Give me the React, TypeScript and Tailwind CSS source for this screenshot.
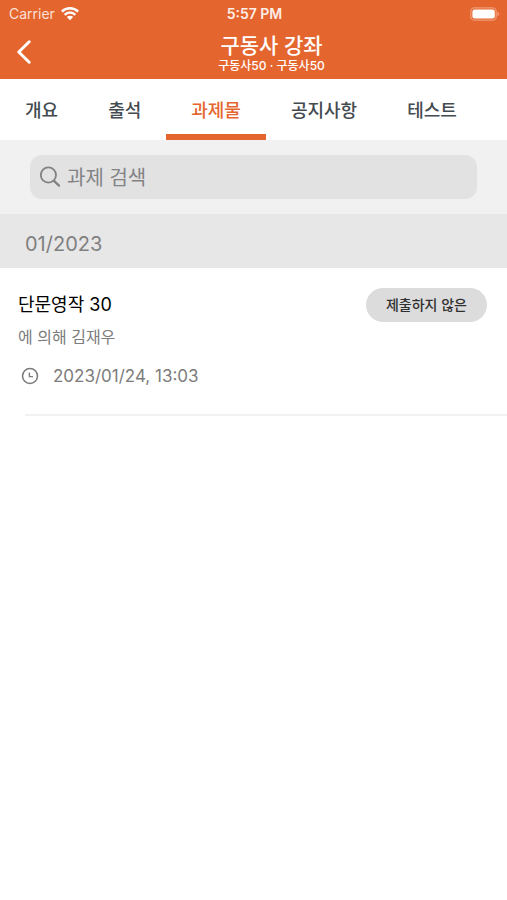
import { useState } from 'react';
import clsx from 'clsx';

interface Assignment {
  id: number;
  title: string;
  author: string;
  due: string;
  status: string;
}

const TABS = ['개요', '출석', '과제물', '공지사항', '테스트'];

const ASSIGNMENTS: Assignment[] = [
  { id: 1, title: '단문영작 30', author: '에 의해 김재우', due: '2023/01/24, 13:03', status: '제출하지 않은' },
];

function WifiIcon() {
  return (
    <svg viewBox="0 0 18 14" className="w-[18px] h-[14px]" fill="none" stroke="currentColor" strokeWidth="2.5">
      <path d="M0.9 4.6a11.5 11.5 0 0 1 16.2 0" />
      <path d="M3.7 7.8a7.5 7.5 0 0 1 10.6 0" />
      <path d="M9 13.2 5.8 10a4.5 4.5 0 0 1 6.4 0z" fill="currentColor" stroke="none" />
    </svg>
  );
}

function BatteryIcon() {
  return (
    <svg viewBox="0 0 30 14" className="w-[30px] h-[14px]">
      <rect x="0.8" y="0.8" width="25.4" height="12.4" rx="3.8" fill="none" stroke="#f09a76" strokeWidth="1.3" />
      <rect x="2.4" y="2.4" width="22.4" height="9.2" rx="2.4" fill="#fff" />
      <path d="M27.4 4.8c2.4 0.8 2.4 3.6 0 4.4z" fill="#f09a76" />
    </svg>
  );
}

function BackIcon() {
  return (
    <svg viewBox="0 0 16 24" className="w-4 h-6" fill="none" stroke="currentColor" strokeWidth="3" strokeLinecap="round" strokeLinejoin="round">
      <path d="M13.2 1.8 2.8 12l10.4 10.2" />
    </svg>
  );
}

function SearchIcon() {
  return (
    <svg viewBox="0 0 22 22" className="w-[22px] h-[22px]" fill="none" stroke="#828285" strokeLinecap="round">
      <circle cx="8.4" cy="9" r="7.6" strokeWidth="1.8" />
      <path d="m14 14.8 5 4.8" strokeWidth="2.3" />
    </svg>
  );
}

function ClockIcon() {
  return (
    <svg viewBox="0 0 18 18" className="w-[18px] h-[18px]" fill="none" stroke="#7c7c7c">
      <circle cx="9" cy="9" r="7.5" strokeWidth="1.6" />
      <path d="M8.4 5.4v4.2h3.6" strokeWidth="1.4" />
    </svg>
  );
}

export default function App() {
  const [tab, setTab] = useState('과제물');
  const [query, setQuery] = useState('');

  const visible = ASSIGNMENTS.filter((a) => a.title.includes(query));

  return (
    <div className="min-h-screen bg-white font-['Inter','Noto_Sans_CJK_KR',sans-serif]">
      <header className="bg-[#e5652f] text-white pb-1">
        {/* Status bar */}
        <div className="grid grid-cols-3 items-center h-7 pl-[9px] pr-[7px] text-sm leading-5">
          <div className="flex items-center gap-1.5 text-[#fbe0d5]">
            <span>Carrier</span>
            <span className="text-white"><WifiIcon /></span>
          </div>
          <span className="text-center font-semibold text-[#fdeee8]">5:57 PM</span>
          <div className="flex justify-end"><BatteryIcon /></div>
        </div>

        <div className="flex items-center h-[47px] pr-3">
          <button type="button" aria-label="뒤로" className="flex items-center justify-center w-12 h-full">
            <BackIcon />
          </button>
          <div className="flex-1 flex flex-col items-center pt-1">
            <h1 className="text-[21px] leading-6 font-medium">구동사 강좌</h1>
            <p className="text-xs leading-4 font-medium">구동사50 · 구동사50</p>
          </div>
        </div>
      </header>

      <nav className="flex h-[61px] overflow-hidden" role="tablist">
        {TABS.map((t) => (
          <button
            key={t}
            type="button"
            role="tab"
            aria-selected={t === tab}
            onClick={() => setTab(t)}
            className={clsx(
              'shrink-0 px-[25px] pt-2 text-lg font-medium border-b-[6px]',
              t === tab ? 'text-[#e5652f] border-[#e5652f]' : 'text-[#434b50] border-transparent',
            )}
          >
            {t}
          </button>
        ))}
      </nav>

      <div className="bg-[#f1f1f1] px-[30px] py-[15px]">
        <label className="flex items-center gap-[5px] h-11 px-2.5 rounded-xl bg-[#e2e2e2]">
          <SearchIcon />
          <input
            type="text"
            value={query}
            onChange={(e) => setQuery(e.target.value)}
            placeholder="과제 검색"
            aria-label="과제 검색"
            className="flex-1 min-w-0 pt-0.5 bg-transparent outline-none text-xl text-[#3c3c3c] placeholder:text-[#838386]"
          />
        </label>
      </div>

      <main>
        <h2 className="bg-[#e7e7e7] px-[25px] pt-4 pb-2.5 text-xl leading-7 text-[#808080]">01/2023</h2>
        <ul>
          {visible.map((a) => (
            <li key={a.id}>
              <div className="flex items-start justify-between pl-[18px] pr-5 pt-5 pb-6">
                <div>
                  <h3 className="pt-px text-lg leading-8 text-black">{a.title}</h3>
                  <p className="text-base leading-8 text-[#7c7c7c]">{a.author}</p>
                  <div className="flex items-center gap-3.5 mt-2 pt-px pl-[3px]">
                    <ClockIcon />
                    <time className="text-[17px] leading-7 text-[#7c7c7c]">{a.due}</time>
                  </div>
                </div>
                <span className="flex items-center h-[34px] px-5 rounded-full bg-[#dcdcdc] text-sm font-medium text-[#303030]">
                  {a.status}
                </span>
              </div>
              <hr className="ml-[25px] border-t-2 border-[#f1f1f1]" />
            </li>
          ))}
        </ul>
      </main>
    </div>
  );
}
